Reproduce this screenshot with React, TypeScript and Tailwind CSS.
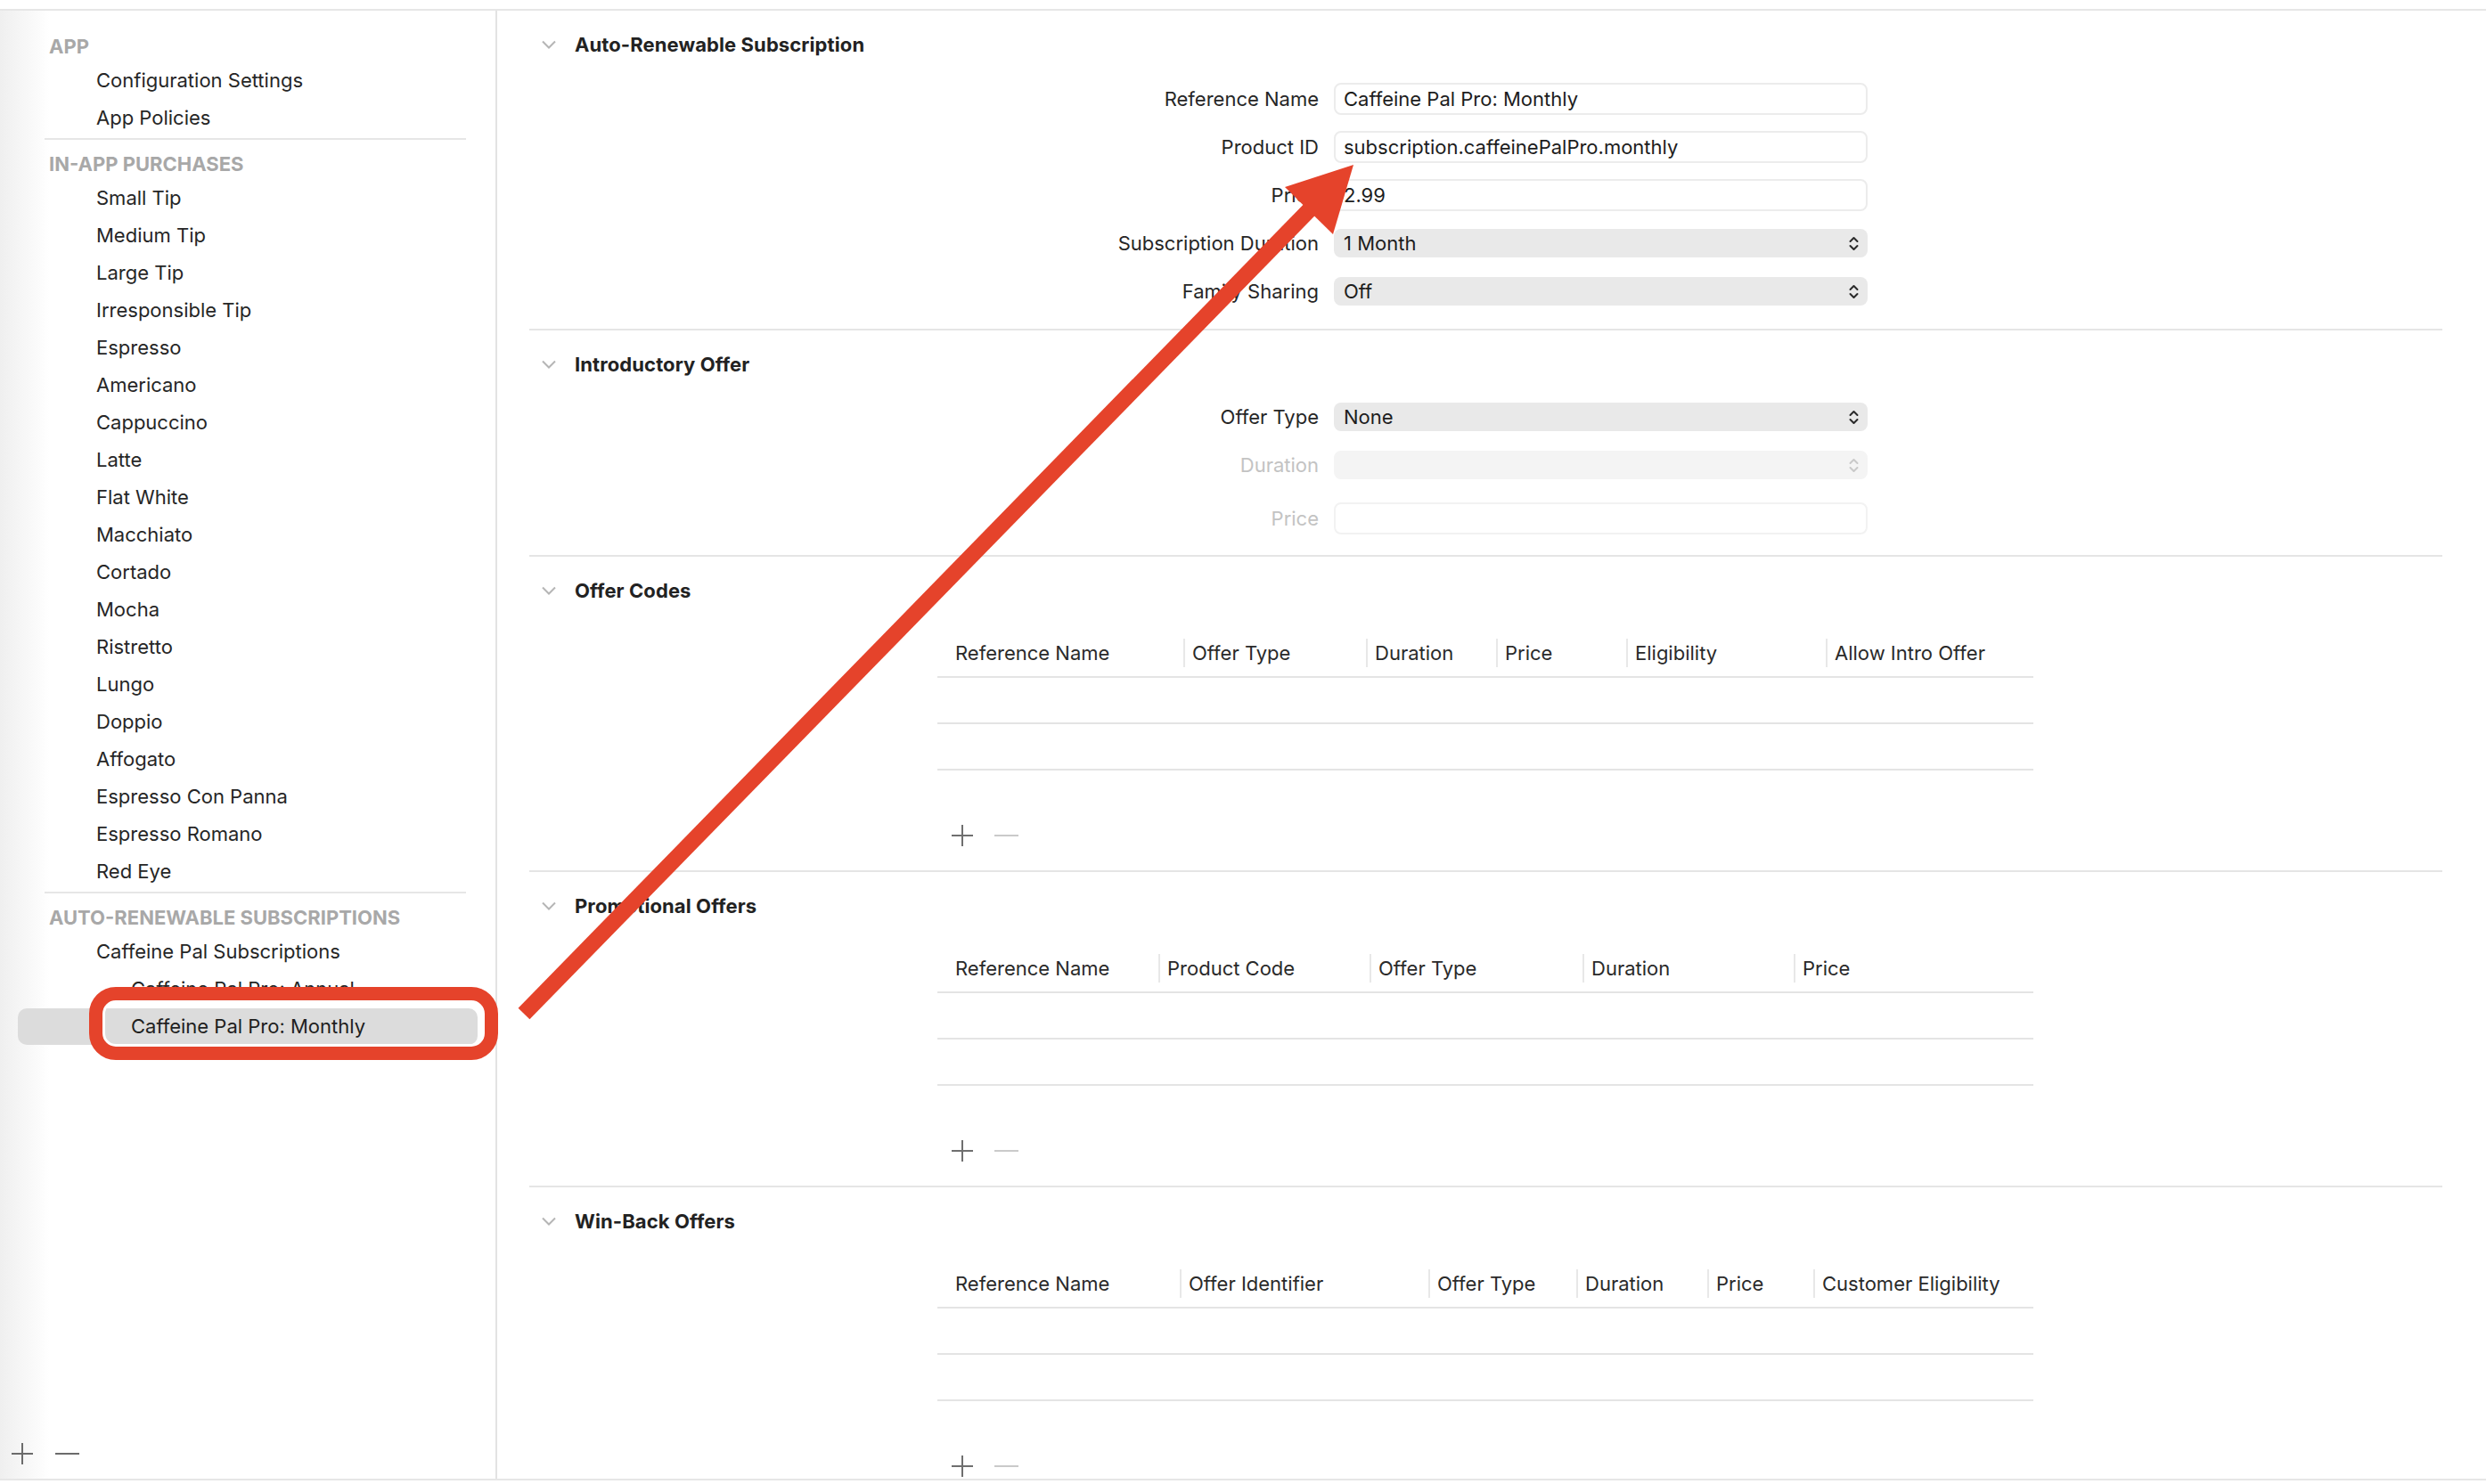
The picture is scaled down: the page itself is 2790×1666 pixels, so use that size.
import type { ReactNode } from 'react'

type Column = { label: string; w: string }

const sidebarGroups: { title: string; items: string[] }[] = [
  { title: 'APP', items: ['Configuration Settings', 'App Policies'] },
  {
    title: 'IN-APP PURCHASES',
    items: [
      'Small Tip',
      'Medium Tip',
      'Large Tip',
      'Irresponsible Tip',
      'Espresso',
      'Americano',
      'Cappuccino',
      'Latte',
      'Flat White',
      'Macchiato',
      'Cortado',
      'Mocha',
      'Ristretto',
      'Lungo',
      'Doppio',
      'Affogato',
      'Espresso Con Panna',
      'Espresso Romano',
      'Red Eye',
    ],
  },
]

const offerCodeColumns: Column[] = [
  { label: 'Reference Name', w: 'w-[276px]' },
  { label: 'Offer Type', w: 'w-[205px]' },
  { label: 'Duration', w: 'w-[146px]' },
  { label: 'Price', w: 'w-[146px]' },
  { label: 'Eligibility', w: 'w-[224px]' },
  { label: 'Allow Intro Offer', w: 'flex-1' },
]

const promoColumns: Column[] = [
  { label: 'Reference Name', w: 'w-[248px]' },
  { label: 'Product Code', w: 'w-[237px]' },
  { label: 'Offer Type', w: 'w-[239px]' },
  { label: 'Duration', w: 'w-[237px]' },
  { label: 'Price', w: 'flex-1' },
]

const winBackColumns: Column[] = [
  { label: 'Reference Name', w: 'w-[272px]' },
  { label: 'Offer Identifier', w: 'w-[279px]' },
  { label: 'Offer Type', w: 'w-[166px]' },
  { label: 'Duration', w: 'w-[147px]' },
  { label: 'Price', w: 'w-[119px]' },
  { label: 'Customer Eligibility', w: 'flex-1' },
]

function PlusIcon({ color }: { color: string }) {
  return (
    <svg width="26" height="26" viewBox="0 0 26 26" fill="none">
      <path d="M13 1v24M1 13h24" stroke={color} strokeWidth="2" />
    </svg>
  )
}

function MinusIcon({ color }: { color: string }) {
  return (
    <svg width="27" height="26" viewBox="0 0 27 26" fill="none">
      <path d="M0 13h27" stroke={color} strokeWidth="2" />
    </svg>
  )
}

function UpDown({ color }: { color: string }) {
  return (
    <svg width="11" height="17" viewBox="0 0 11 17" fill="none">
      <path
        d="M1.5 6L5.5 2l4 4M1.5 11l4 4 4-4"
        stroke={color}
        strokeWidth="2"
        strokeLinecap="round"
        strokeLinejoin="round"
      />
    </svg>
  )
}

function SectionHeader({ title }: { title: string }) {
  return (
    <div className="flex h-[40px] items-center pl-[14px]">
      <svg width="16" height="10" viewBox="0 0 16 10" fill="none">
        <path d="M1 1.5l7 7 7-7" stroke="#b5b5b5" strokeWidth="2" />
      </svg>
      <span className="ml-[21px] text-[22px] font-bold tracking-[0.1px] text-[#222]">
        {title}
      </span>
    </div>
  )
}

function FormRow({
  label,
  disabled,
  children,
}: {
  label: string
  disabled?: boolean
  children: ReactNode
}) {
  return (
    <div className="flex h-[54px] items-center">
      <div
        className={
          disabled
            ? 'w-[886px] text-right text-[22px] text-[#c3c3c3]'
            : 'w-[886px] text-right text-[22px] text-[#262626]'
        }
      >
        {label}
      </div>
      <div className="ml-[17px] w-[599px]">{children}</div>
    </div>
  )
}

function TextField({ value, disabled }: { value?: string; disabled?: boolean }) {
  return (
    <div
      className={
        disabled
          ? 'flex h-[36px] items-center rounded-[8px] border-2 border-[#f2f2f2] bg-white pl-[9px]'
          : 'flex h-[36px] items-center rounded-[8px] border-2 border-[#ececec] bg-white pl-[9px] text-[22px] text-[#1d1d1d]'
      }
    >
      {value}
    </div>
  )
}

function PopUp({ value, disabled }: { value?: string; disabled?: boolean }) {
  return (
    <div
      className={
        disabled
          ? 'flex h-[32px] items-center justify-between rounded-[8px] bg-[#f4f4f4] pl-[11px] pr-[10px]'
          : 'flex h-[32px] items-center justify-between rounded-[8px] bg-[#e9e9e9] pl-[11px] pr-[10px] text-[22px] text-[#1d1d1d]'
      }
    >
      <span>{value}</span>
      <UpDown color={disabled ? '#c9c9c9' : '#2a2a2a'} />
    </div>
  )
}

function OfferTable({ columns }: { columns: Column[] }) {
  return (
    <>
      <div className="ml-[458px] mt-[24px] w-[1230px]">
        <div className="flex h-[54px] items-center border-b-2 border-[#e4e4e4]">
          {columns.map((col, i) => (
            <div key={col.label} className={`${col.w} flex items-center`}>
              {i === 0 ? (
                <span className="pl-[20px] text-[22px] text-[#2a2a2a]">
                  {col.label}
                </span>
              ) : (
                <>
                  <span className="h-[32px] w-[2px] bg-[#e8e8e8]" />
                  <span className="ml-[8px] text-[22px] text-[#2a2a2a]">
                    {col.label}
                  </span>
                </>
              )}
            </div>
          ))}
        </div>
        <div className="h-[52px] border-b-2 border-[#e4e4e4]" />
        <div className="h-[52px] border-b-2 border-[#e4e4e4]" />
      </div>
      <div className="ml-[473px] mt-[60px] flex h-[26px] items-center gap-[23px]">
        <PlusIcon color="#6f6f6f" />
        <MinusIcon color="#cacaca" />
      </div>
    </>
  )
}

function Sidebar() {
  return (
    <aside className="relative flex w-[558px] shrink-0 flex-col border-r-2 border-[#e3e3e3] bg-[linear-gradient(to_right,#efefef,#ffffff_56px)] text-[22px]">
      <div className="pt-[23px]">
        {sidebarGroups.map((group) => (
          <div key={group.title}>
            <div className="flex h-[34px] items-center pl-[55px] font-bold text-[#a8a8a8]">
              {group.title}
            </div>
            {group.items.map((item) => (
              <div
                key={item}
                className="flex h-[42px] items-center pl-[108px] text-[#262626]"
              >
                {item}
              </div>
            ))}
            <div className="mb-[10px] ml-[50px] mt-[2px] h-[2px] w-[473px] bg-[#e6e6e6]" />
          </div>
        ))}
        <div className="flex h-[34px] items-center pl-[55px] font-bold text-[#a8a8a8]">
          AUTO-RENEWABLE SUBSCRIPTIONS
        </div>
        <div className="flex h-[42px] items-center pl-[108px] text-[#262626]">
          Caffeine Pal Subscriptions
        </div>
        <div className="flex h-[42px] items-center pl-[147px] text-[#262626]">
          Caffeine Pal Pro: Annual
        </div>
        <div className="flex h-[42px] items-start pt-[1px]">
          <div className="mx-[20px] flex h-[41px] flex-1 items-center rounded-[10px] bg-[#dcdcdc] pl-[127px] text-[#1f1f1f]">
            Caffeine Pal Pro: Monthly
          </div>
        </div>
      </div>
      <div className="flex-1" />
      <div className="flex h-[56px] items-center gap-[24px] pl-[12px]">
        <PlusIcon color="#6b6b6b" />
        <MinusIcon color="#6b6b6b" />
      </div>
    </aside>
  )
}

export default function App() {
  return (
    <div className="relative h-[1666px] w-[2790px] overflow-hidden bg-white pt-[10px] font-[Inter,'Liberation_Sans',sans-serif]">
      <div className="flex h-[1652px] border-y-2 border-[#e6e6e6]">
        <Sidebar />
        <main className="flex-1 overflow-hidden pl-[36px] pr-[49px]">
          <section className="border-b-2 border-[#e5e5e5] pb-[15px] pt-[18px]">
            <SectionHeader title="Auto-Renewable Subscription" />
            <div className="mt-[14px]">
              <FormRow label="Reference Name">
                <TextField value="Caffeine Pal Pro: Monthly" />
              </FormRow>
              <FormRow label="Product ID">
                <TextField value="subscription.caffeinePalPro.monthly" />
              </FormRow>
              <FormRow label="Price">
                <TextField value="2.99" />
              </FormRow>
              <FormRow label="Subscription Duration">
                <PopUp value="1 Month" />
              </FormRow>
              <FormRow label="Family Sharing">
                <PopUp value="Off" />
              </FormRow>
            </div>
          </section>

          <section className="border-b-2 border-[#e5e5e5] pb-[14px] pt-[18px]">
            <SectionHeader title="Introductory Offer" />
            <div className="mt-[12px]">
              <FormRow label="Offer Type">
                <PopUp value="None" />
              </FormRow>
              <FormRow label="Duration" disabled>
                <PopUp disabled />
              </FormRow>
              <div className="mt-[6px]">
                <FormRow label="Price" disabled>
                  <TextField disabled />
                </FormRow>
              </div>
            </div>
          </section>

          <section className="border-b-2 border-[#e5e5e5] pb-[26px] pt-[18px]">
            <SectionHeader title="Offer Codes" />
            <OfferTable columns={offerCodeColumns} />
          </section>

          <section className="border-b-2 border-[#e5e5e5] pb-[26px] pt-[18px]">
            <SectionHeader title="Promotional Offers" />
            <OfferTable columns={promoColumns} />
          </section>

          <section className="pb-[26px] pt-[18px]">
            <SectionHeader title="Win-Back Offers" />
            <OfferTable columns={winBackColumns} />
          </section>
        </main>
      </div>

      {/* annotation: highlight box around the selected row */}
      <div className="pointer-events-none absolute left-[100px] top-[1108px] h-[82px] w-[459px] rounded-[30px] border-[15px] border-[#e5432b] shadow-[inset_0_0_0_3px_#ffffff]" />

      {/* annotation: arrow to the product id field */}
      <svg
        className="pointer-events-none absolute left-0 top-0"
        width="2790"
        height="1666"
        viewBox="0 0 2790 1666"
      >
        <line
          x1="588"
          y1="1138"
          x2="1472"
          y2="233"
          stroke="#e5432b"
          strokeWidth="18"
        />
        <polygon points="1519,185 1442,210 1496,263" fill="#e5432b" />
      </svg>
    </div>
  )
}
